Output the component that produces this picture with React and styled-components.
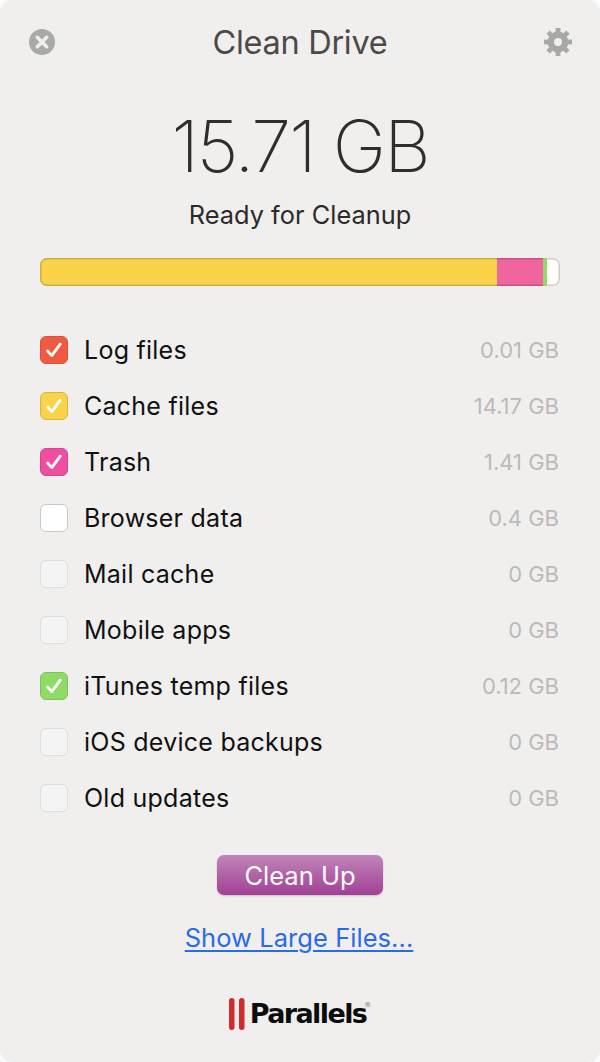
import React from "react";
import styled, { createGlobalStyle } from "styled-components";

const Global = createGlobalStyle`
  html, body { margin: 0; padding: 0; background: #fbfbfb; }
  body { font-family: Inter, "Liberation Sans", sans-serif; -webkit-font-smoothing: antialiased; }
`;

const Window = styled.div`
  width: 600px;
  height: 1062px;
  box-sizing: border-box;
  background: #f0efee;
  border-radius: 12px;
  padding: 0 40px;
  display: flex;
  flex-direction: column;
  overflow: hidden;
`;

const Header = styled.header`
  height: 84px;
  display: flex;
  align-items: center;
  justify-content: space-between;
`;

const IconSlot = styled.button`
  width: 36px;
  height: 36px;
  margin: 0 -16px;
  padding: 0;
  border: 0;
  background: none;
  display: flex;
  align-items: center;
  justify-content: center;
`;

const Title = styled.h1`
  margin: 0;
  font-size: 32.5px;
  font-weight: 400;
  color: #4b4a49;
  letter-spacing: -0.3px;
`;

const Total = styled.div`
  margin-top: 18px;
  height: 88px;
  line-height: 88px;
  text-align: center;
  font-size: 72px;
  font-weight: 200;
  color: #2f2e2d;
  letter-spacing: -2px;
`;

const Subtitle = styled.div`
  margin-top: 9px;
  text-align: center;
  font-size: 25.3px;
  line-height: 32px;
  color: #2b2a29;
  letter-spacing: 0.05px;
`;

const Bar = styled.div`
  margin-top: 27px;
  height: 28px;
  box-sizing: border-box;
  display: flex;
  background: #fff;
  border-radius: 7px;
  overflow: hidden;
  box-shadow: inset 0 0 0 1.5px #cfcdcc;
`;

const Segment = styled.div`
  height: 100%;
  background: ${p => p.$color};
  box-shadow: inset 0 1.5px 0 ${p => p.$edge}, inset 0 -1.5px 0 ${p => p.$edge};
  &:first-child {
    box-shadow: inset 1.5px 0 0 ${p => p.$edge}, inset 0 1.5px 0 ${p => p.$edge}, inset 0 -1.5px 0 ${p => p.$edge};
    border-radius: 7px 0 0 7px;
  }
`;

const List = styled.ul`
  list-style: none;
  margin: 36px 0 0;
  padding: 0;
`;

const Row = styled.li`
  height: 56px;
  display: flex;
  align-items: center;
`;

const Box = styled.span`
  width: 28px;
  height: 28px;
  box-sizing: border-box;
  flex: none;
  border-radius: 6px;
  background: ${p => p.$color || (p.$idle ? "#f5f4f4" : "#fff")};
  border: 1.5px solid ${p => p.$edge || (p.$idle ? "#dededd" : "#c9c8c7")};
  display: flex;
  align-items: center;
  justify-content: center;
`;

const Label = styled.span`
  margin-left: 16px;
  flex: 1;
  font-size: 25px;
  color: #111;
  letter-spacing: 0.25px;
`;

const Size = styled.span`
  font-size: 22px;
  color: #bbbaba;
  margin-right: 1px;
`;

const CleanButton = styled.button`
  align-self: center;
  margin-top: 29px;
  width: 166px;
  height: 40px;
  padding: 1px 0 0;
  border: 0;
  border-radius: 7px;
  background: linear-gradient(#c186b9, #a23f96);
  box-shadow: 0 1px 2px rgba(0,0,0,.18);
  color: #fff;
  font-family: inherit;
  font-size: 25.5px;
  line-height: 39px;
`;

const LargeLink = styled.a`
  align-self: center;
  margin-top: 27px;
  margin-right: 2px;
  font-size: 25.5px;
  line-height: 32px;
  color: #2b6ae8;
  text-decoration: underline;
  text-decoration-thickness: 2px;
  text-underline-offset: 3px;
  letter-spacing: 0.05px;
`;

const Logo = styled.div`
  align-self: center;
  margin-top: 44px;
  margin-right: 5px;
  display: flex;
  align-items: center;
  gap: 5px;
`;

const LogoWord = styled.span`
  font-family: "DejaVu Sans", sans-serif;
  font-weight: 700;
  font-size: 27px;
  line-height: 32px;
  letter-spacing: -1.6px;
  color: #0c0c0c;
  position: relative;
`;

const Reg = styled.sup`
  position: absolute;
  top: 3px;
  right: -5px;
  font-size: 7px;
  line-height: 8px;
  letter-spacing: 0;
  font-weight: 400;
  color: #777;
`;

const CloseIcon = () => (
  <svg width="26" height="26" viewBox="0 0 26 26">
    <circle cx="13" cy="13" r="13" fill="#a9a9a8" />
    <path d="M8.3 8.3 17.7 17.7M17.7 8.3 8.3 17.7" stroke="#efefee" strokeWidth="3.6" strokeLinecap="round" />
  </svg>
);

const teeth = [0, 45, 90, 135, 180, 225, 270, 315];

const GearIcon = () => (
  <svg width="28" height="28" viewBox="0 0 28 28">
    {teeth.map(a => (
      <rect key={a} x="11.6" y="0" width="4.8" height="6" fill="#a8a8a7" transform={`rotate(${a} 14 14)`} />
    ))}
    <circle cx="14" cy="14" r="7.2" fill="none" stroke="#a8a8a7" strokeWidth="6.4" />
  </svg>
);

const Check = ({ color }) => (
  <svg width="20" height="20" viewBox="0 0 20 20">
    <path d="M3.6 11 7.8 15.6 16.2 4.2" fill="none" stroke={color} strokeWidth="2.8" strokeLinecap="round" strokeLinejoin="round" />
  </svg>
);

const LogoBars = () => (
  <svg width="16" height="32" viewBox="0 0 16 32">
    <rect x="0" y="0" width="5.5" height="32" rx="2.75" fill="#cf2a30" />
    <rect x="10" y="0" width="5.5" height="32" rx="2.75" fill="#cf2a30" />
  </svg>
);

const items = [
  { name: "Log files", size: "0.01 GB", color: "#f15a42", edge: "#d9503c", tick: "#fff" },
  { name: "Cache files", size: "14.17 GB", color: "#f9d348", edge: "#d8b540", tick: "#fff" },
  { name: "Trash", size: "1.41 GB", color: "#ee4fa0", edge: "#d04690", tick: "#fff" },
  { name: "Browser data", size: "0.4 GB" },
  { name: "Mail cache", size: "0 GB", idle: true },
  { name: "Mobile apps", size: "0 GB", idle: true },
  { name: "iTunes temp files", size: "0.12 GB", color: "#8fdb68", edge: "#7fc25d", tick: "#fff" },
  { name: "iOS device backups", size: "0 GB", idle: true },
  { name: "Old updates", size: "0 GB", idle: true },
];

const segments = [
  { w: 457, color: "#f9d348", edge: "#cfae3e" },
  { w: 46, color: "#f0659f", edge: "#c4557f" },
  { w: 4, color: "#8fdb68", edge: "#8fdb68" },
];

export default function App() {
  return (
    <>
      <Global />
      <Window>
        <Header>
          <IconSlot aria-label="Close"><CloseIcon /></IconSlot>
          <Title>Clean Drive</Title>
          <IconSlot aria-label="Settings"><GearIcon /></IconSlot>
        </Header>
        <Total>15.71 GB</Total>
        <Subtitle>Ready for Cleanup</Subtitle>
        <Bar>
          {segments.map(s => (
            <Segment key={s.color} $color={s.color} $edge={s.edge} style={{ width: s.w }} />
          ))}
        </Bar>
        <List>
          {items.map(i => (
            <Row key={i.name}>
              <Box $color={i.color} $edge={i.edge} $idle={i.idle}>
                {i.tick && <Check color={i.tick} />}
              </Box>
              <Label>{i.name}</Label>
              <Size>{i.size}</Size>
            </Row>
          ))}
        </List>
        <CleanButton>Clean Up</CleanButton>
        <LargeLink href="#">Show Large Files...</LargeLink>
        <Logo>
          <LogoBars />
          <LogoWord>Parallels<Reg>®</Reg></LogoWord>
        </Logo>
      </Window>
    </>
  );
}
